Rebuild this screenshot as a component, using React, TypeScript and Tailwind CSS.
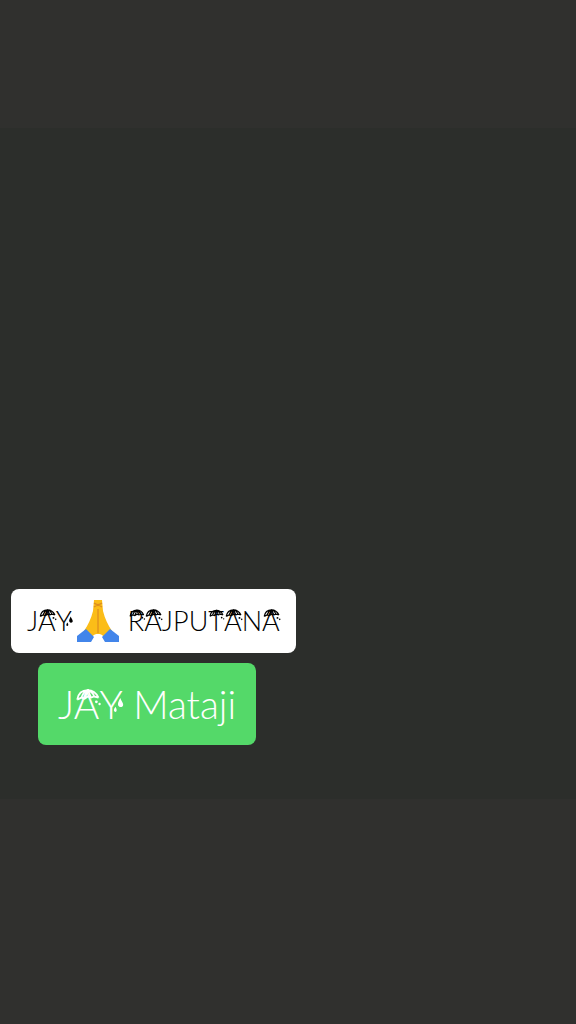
const UMBRELLA_LETTERS = ["A", "R", "T"];

// Little umbrella canopy with rain drops that sits on top of a letter
const Umbrella = () => (
  <svg
    viewBox="0 0 24 16"
    className="absolute top-[0.2em] left-0 h-[0.44em] w-full overflow-visible"
    aria-hidden="true"
  >
    <path
      d="M3 10C4 4 8 1 13 1C18 1 21 4 23 8M3 10L7 8L10 9L13 7L16 8L19 7L23 8M7 8C8 5 10 2 13 1M10 9L13 1M16 8L13 1M19 7C18 4 16 2 13 1"
      stroke="currentColor"
      strokeWidth="1.7"
      fill="none"
    />
    <circle cx="21" cy="12" r="1.3" fill="currentColor" />
    <circle cx="24" cy="14" r="1.1" fill="currentColor" />
  </svg>
);

const Drops = () => (
  <svg
    viewBox="0 0 24 16"
    className="absolute top-[0.4em] left-0 h-[0.5em] w-full overflow-visible"
    aria-hidden="true"
  >
    <path d="M22 0C20 4 19 6 20 8C21 10 25 10 25 7C25 5 23 3 22 0Z" fill="currentColor" />
    <path d="M17 9C15 12 15 13 16 14C17 15 19 14 18 11Z" fill="currentColor" />
  </svg>
);

const RainyText = ({ text }: { text: string }) => (
  <span>
    {text.split("").map((letter, i) => (
      <span key={i} className="relative">
        {letter}
        {UMBRELLA_LETTERS.includes(letter) && <Umbrella />}
        {letter === "Y" && <Drops />}
      </span>
    ))}
  </span>
);

const FoldedHands = () => (
  <svg viewBox="0 0 44 44" className="h-11 w-11" role="img" aria-label="Folded hands">
    <path
      d="M18 1H26L27 12C29 20 32 26 36 32L29 39C26 35 24 35 22 35C20 35 18 35 15 39L8 32C12 26 15 20 17 12Z"
      fill="#fbbd18"
    />
    <path
      d="M22 10V34M18 4Q22 7 26 4M18 8Q22 5 26 8"
      stroke="#dc8b20"
      strokeWidth="1.2"
      fill="none"
    />
    <path d="M10 30L18 38L15 43H1V37Z" fill="#4285ea" />
    <path d="M34 30L26 38L29 43H43V37Z" fill="#4285ea" />
  </svg>
);

const App = () => {
  return (
    <div className="flex min-h-screen flex-col bg-[#30302e] font-['Lato',sans-serif] font-light">
      {/* Top band */}
      <div className="h-[12.5vh]" />

      {/* Story area with the two labels */}
      <main className="flex flex-1 flex-col items-start justify-end gap-2.5 bg-[#2c2e2b] pb-[54px]">
        <p className="ml-[11px] flex h-16 items-center rounded-lg bg-white px-4 text-[27px] leading-9 text-black">
          <RainyText text="JAY" />
          <span className="mr-2 ml-1">
            <FoldedHands />
          </span>
          <RainyText text="RAJPUTANA" />
        </p>
        <p className="ml-[38px] flex h-[82px] items-center rounded-lg bg-[#54d969] px-5 text-[39px] leading-[50px] text-white">
          <span>
            <RainyText text="JAY" /> Mataji
          </span>
        </p>
      </main>

      {/* Bottom band */}
      <div className="h-[22vh]" />
    </div>
  );
};

export default App;
